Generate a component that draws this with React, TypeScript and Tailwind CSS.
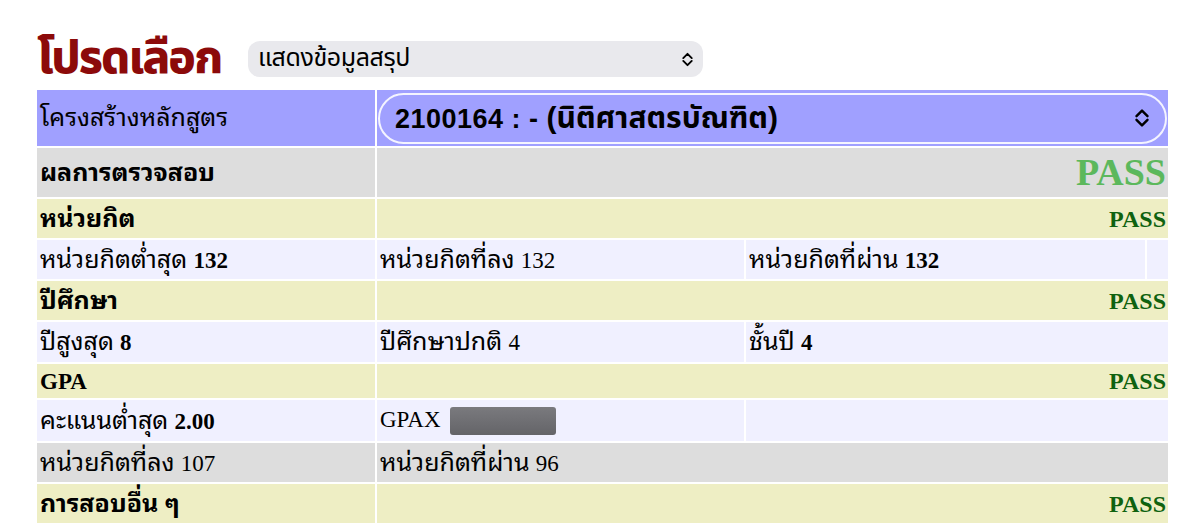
export default function App() {
  const font = "font-['Liberation_Serif','Noto_Sans_Thai_Looped','Loma','Garuda','Noto_Sans_Thai','Noto_Sans',serif]";

  const Chevron = ({ className }: { className: string }) => (
    <svg viewBox="0 0 12 18" className={className} fill="none" stroke="currentColor" strokeWidth="2" strokeLinecap="round" strokeLinejoin="round">
      <path d="M1.5 7.5L6 3l4.5 4.5" />
      <path d="M1.5 10.5L6 15l4.5-4.5" />
    </svg>
  );

  const Pass = () => <span className="text-[24px] font-bold text-[#0f620f]">PASS</span>;
  const N = ({ children, bold }: { children: React.ReactNode; bold?: boolean }) => (
    <span className={`text-[23px] ${bold ? "font-bold" : ""}`}>{children}</span>
  );

  return (
    <div className={`min-h-[532px] overflow-hidden bg-white pt-[41px] text-black ${font}`}>
      <div className="flex h-[36px] items-center pl-[37px]">
        <h1 className="w-[211px] shrink-0 font-['Noto_Sans_Thai','Liberation_Sans',sans-serif] text-[46px] font-extrabold leading-none tracking-[-2px] text-[#8c0a0a]">
          โปรดเลือก
        </h1>
        <div className="flex h-[36px] w-[455px] items-center justify-between rounded-[12px] bg-[#e9e9ed] pl-[10px] pr-[9px] font-['Noto_Sans_Thai','Liberation_Sans',sans-serif] text-[25px]">
          <span className="tracking-[-0.4px]">แสดงข้อมูลสรุป</span>
          <Chevron className="h-[17px] w-[13px]" />
        </div>
      </div>

      <table className="ml-[35px] mt-[11px] w-[1135px] table-fixed border-separate border-spacing-[2px] text-[25px] leading-tight">
        <colgroup>
          <col className="w-[338px]" />
          <col className="w-[367px]" />
          <col className="w-[399px]" />
          <col className="w-[21px]" />
        </colgroup>
        <tbody>
          <tr className="h-[56px]">
            <td className="bg-[#a0a0ff] px-[3px]">โครงสร้างหลักสูตร</td>
            <td colSpan={3} className="bg-[#a0a0ff] p-[1px]">
              <div className="flex h-[51px] items-center justify-between rounded-full border-2 border-[#f4f4ff] pl-[15px] pr-[15px] font-['Liberation_Sans','Noto_Sans_Thai',sans-serif] text-[30px] font-bold">
                <span>
                  <span className="text-[27px] tracking-[0.5px]">2100164 : - </span>(นิติศาสตรบัณฑิต)
                </span>
                <Chevron className="h-[22px] w-[16px]" />
              </div>
            </td>
          </tr>
          <tr className="h-[49px]">
            <td className="bg-[#dddddd] px-[3px] font-bold">ผลการตรวจสอบ</td>
            <td colSpan={3} className="bg-[#dddddd] px-[2px] text-right">
              <span className="text-[38px] font-bold leading-none text-[#5cb85c]">PASS</span>
            </td>
          </tr>
          <tr className="h-[39px]">
            <td className="bg-[#eeeec4] px-[3px] font-bold">หน่วยกิต</td>
            <td colSpan={3} className="bg-[#eeeec4] px-[2px] text-right"><Pass /></td>
          </tr>
          <tr className="h-[39px]">
            <td className="bg-[#f0f0ff] px-[3px]">หน่วยกิตต่ำสุด <N bold>132</N></td>
            <td className="bg-[#f0f0ff] px-[3px]">หน่วยกิตที่ลง <N>132</N></td>
            <td className="bg-[#f0f0ff] px-[3px]">หน่วยกิตที่ผ่าน <N bold>132</N></td>
            <td className="bg-[#f0f0ff]"></td>
          </tr>
          <tr className="h-[39px]">
            <td className="bg-[#eeeec4] px-[3px] font-bold">ปีศึกษา</td>
            <td colSpan={3} className="bg-[#eeeec4] px-[2px] text-right"><Pass /></td>
          </tr>
          <tr className="h-[40px]">
            <td className="bg-[#f0f0ff] px-[3px]">ปีสูงสุด <N bold>8</N></td>
            <td className="bg-[#f0f0ff] px-[3px]">ปีศึกษาปกติ <N>4</N></td>
            <td colSpan={2} className="bg-[#f0f0ff] px-[3px]">ชั้นปี <N bold>4</N></td>
          </tr>
          <tr className="h-[34px]">
            <td className="bg-[#eeeec4] px-[3px] font-bold"><N bold>GPA</N></td>
            <td colSpan={3} className="bg-[#eeeec4] px-[2px] text-right"><Pass /></td>
          </tr>
          <tr className="h-[41px]">
            <td className="bg-[#f0f0ff] px-[3px]">คะแนนต่ำสุด <N bold>2.00</N></td>
            <td className="bg-[#f0f0ff] px-[3px]">
              <div className="flex items-center gap-[9px]">
                <N>GPAX</N>
                <span className="inline-block h-[28px] w-[106px] rounded-[3px] bg-gradient-to-b from-[#7a7a7e] to-[#646468]"></span>
              </div>
            </td>
            <td colSpan={2} className="bg-[#f0f0ff] px-[3px]"></td>
          </tr>
          <tr className="h-[39px]">
            <td className="bg-[#dddddd] px-[3px]">หน่วยกิตที่ลง <N>107</N></td>
            <td colSpan={3} className="bg-[#dddddd] px-[3px]">หน่วยกิตที่ผ่าน <N>96</N></td>
          </tr>
          <tr className="h-[39px]">
            <td className="bg-[#eeeec4] px-[3px] font-bold">การสอบอื่น ๆ</td>
            <td colSpan={3} className="bg-[#eeeec4] px-[2px] text-right"><Pass /></td>
          </tr>
        </tbody>
      </table>
    </div>
  );
}
